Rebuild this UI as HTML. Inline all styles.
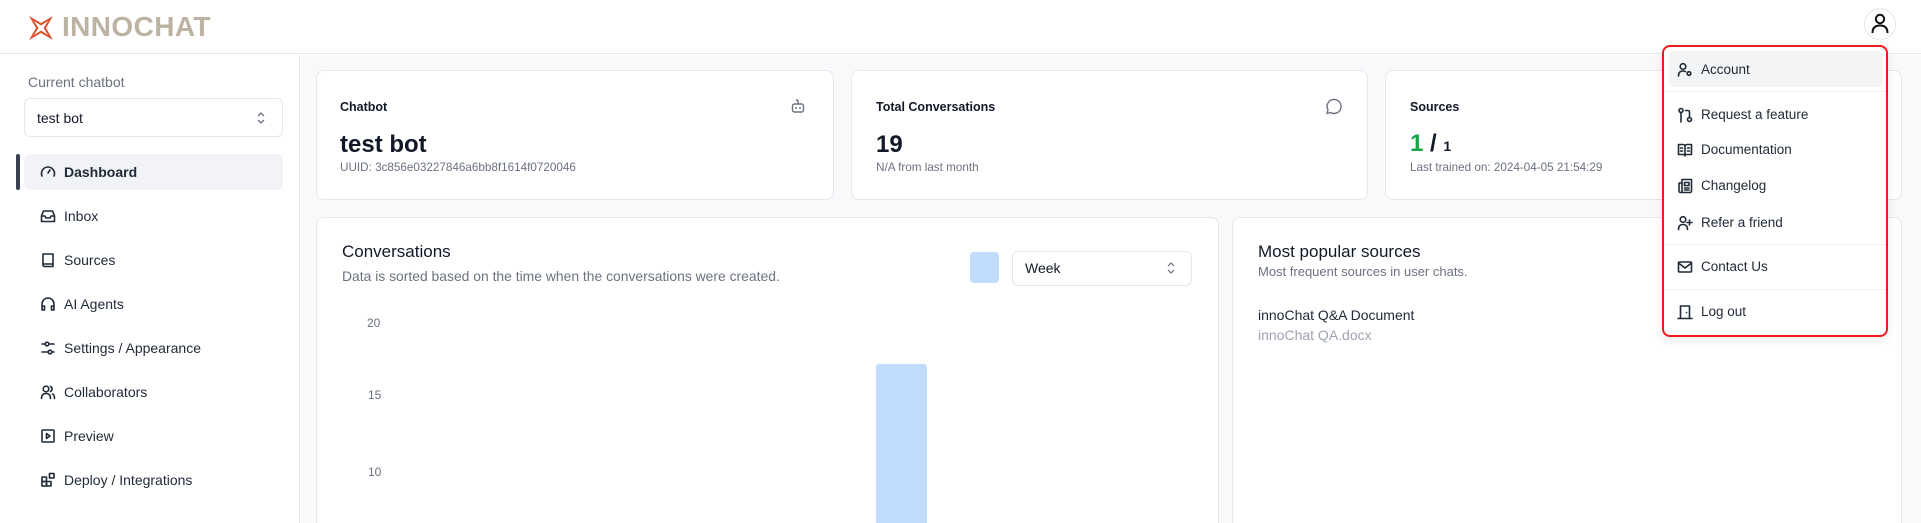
<!DOCTYPE html>
<html style="width:1921px;height:523px;overflow:hidden"><head><meta charset="utf-8"><style>
*{box-sizing:border-box;margin:0;padding:0}
body{width:1921px;height:523px;overflow:hidden;font-family:"Liberation Sans",sans-serif;background:#fff;color:#111827}
#wrap{position:relative;width:1921px;height:523px;overflow:hidden}
.abs{position:absolute}
.hdr{left:0;top:0;width:1921px;height:54px;border-bottom:1px solid #e5e7eb;background:#fff}
.side{left:0;top:55px;width:300px;height:468px;border-right:1px solid #e5e7eb;background:#fff}
.main{left:301px;top:55px;width:1620px;height:468px;background:#f8f9fb}
.card{position:absolute;background:#fff;border:1px solid #e5e7eb;border-radius:8px}
.card.b{border-bottom:none;border-radius:8px 8px 0 0}
.nav{position:absolute;left:24px;width:259px;height:36px;display:flex;align-items:center;font-size:14px;color:#1f2937}
.nav svg{position:absolute;left:16px}
.nav span{position:absolute;left:40px}
.ico{fill:none;stroke:#1f2937;stroke-width:1.6;stroke-linecap:round;stroke-linejoin:round}
.mi{position:absolute;left:1669px;width:214px;height:34px;font-size:13.5px;color:#1f2937}
.mi svg{position:absolute;left:8px;top:9px}
.mi span{position:absolute;left:32px;top:9px}
.sep{position:absolute;left:1664px;width:222px;height:1px;background:#eef0f3}
</style></head><body><div id="wrap">
<div class="abs hdr"></div>
<svg class="abs" style="left:27px;top:14px" width="28" height="28" viewBox="0 0 28 28"><path d="M2 2 L14 9 L26 2 L19 14 L26 26 L14 19 L2 26 L9 14 Z M7 7 L11.5 14 L7 21 L14 16.5 L21 21 L16.5 14 L21 7 L14 11.5 Z" fill="#d9532f" fill-rule="evenodd"/></svg>
<div class="abs" style="left:62px;top:11px;font-size:28px;font-weight:bold;color:#bdb3a2;letter-spacing:0.4px">INNOCHAT</div>
<div class="abs" style="left:1864px;top:8px;width:32px;height:32px;border:1px solid #e5e7eb;border-radius:50%"></div>
<svg class="abs" style="left:1870px;top:13px" width="20" height="22" viewBox="0 0 20 22"><circle cx="10" cy="6" r="4.2" fill="none" stroke="#111" stroke-width="2"/><path d="M2.5 20 C2.5 14 6 12.5 10 12.5 C14 12.5 17.5 14 17.5 20" fill="none" stroke="#111" stroke-width="2"/></svg>

<div class="abs side"></div>
<div class="abs" style="left:28px;top:74px;font-size:14px;color:#6b7280">Current chatbot</div>
<div class="abs" style="left:24px;top:98px;width:259px;height:39px;border:1px solid #e5e7eb;border-radius:6px"></div>
<div class="abs" style="left:37px;top:110px;font-size:14px">test bot</div>
<svg class="abs" style="left:255px;top:110px" width="12" height="16" viewBox="0 0 12 16"><path d="M3 6 L6 3 L9 6 M3 10 L6 13 L9 10" fill="none" stroke="#6b7280" stroke-width="1.3"/></svg>
<div class="abs" style="left:16px;top:154px;width:4px;height:36px;background:#374151;border-radius:2px"></div>
<div class="nav" style="top:154px;background:#f1f3f7;border-radius:6px;font-weight:bold"><svg width="16" height="16" viewBox="0 0 16 16" class="ico"><path d="M2 12 A6.5 6.5 0 1 1 14 12 M8 9 L10 6"/></svg><span>Dashboard</span></div>
<div class="nav" style="top:198px"><svg width="16" height="16" viewBox="0 0 16 16" class="ico"><path d="M1.5 8 L3.5 3 H12.5 L14.5 8 V13.5 H1.5 Z M1.5 8 H5 L6 10 H10 L11 8 H14.5"/></svg><span>Inbox</span></div>
<div class="nav" style="top:242px"><svg width="16" height="16" viewBox="0 0 16 16" class="ico"><path d="M3 2 H13 V14.5 H4.5 A1.5 1.5 0 0 1 3 13 Z M3 12 H13"/></svg><span>Sources</span></div>
<div class="nav" style="top:286px"><svg width="16" height="16" viewBox="0 0 16 16" class="ico"><path d="M2 12 V8 A6 6 0 0 1 14 8 V12 M2 10 H4.5 V14 H2 Z M11.5 10 H14 V14 H11.5 Z"/></svg><span>AI Agents</span></div>
<div class="nav" style="top:330px"><svg width="16" height="16" viewBox="0 0 16 16" class="ico"><path d="M2 4 H5 M9 4 H14 M2 12 H8 M12 12 H14"/><circle cx="7" cy="4" r="1.8"/><circle cx="10" cy="12" r="1.8"/></svg><span>Settings / Appearance</span></div>
<div class="nav" style="top:374px"><svg width="16" height="16" viewBox="0 0 16 16" class="ico"><circle cx="6" cy="5" r="2.8"/><path d="M1.5 14.5 C1.5 10.5 3.5 9.5 6 9.5 C8.5 9.5 10.5 10.5 10.5 14.5 M10.5 2.5 A2.8 2.8 0 0 1 10.5 7.5 M12.5 10 C14 10.5 14.5 12 14.5 14.5"/></svg><span>Collaborators</span></div>
<div class="nav" style="top:418px"><svg width="16" height="16" viewBox="0 0 16 16" class="ico"><rect x="2" y="2" width="12" height="12" rx="1"/><path d="M6.5 5.5 L10 8 L6.5 10.5 Z"/></svg><span>Preview</span></div>
<div class="nav" style="top:462px"><svg width="16" height="16" viewBox="0 0 16 16" class="ico"><rect x="2" y="5" width="4.5" height="4.5"/><rect x="2" y="9.5" width="4.5" height="4.5"/><rect x="6.5" y="9.5" width="4.5" height="4.5"/><rect x="9.5" y="1.5" width="4.5" height="4.5"/></svg><span>Deploy / Integrations</span></div>

<div class="abs main"></div>
<div class="card" style="left:316px;top:70px;width:518px;height:130px"></div>
<div class="abs" style="left:340px;top:100px;font-size:12.5px;font-weight:bold;color:#111827">Chatbot</div>
<svg class="abs" style="left:790px;top:98px" width="16" height="18" viewBox="0 0 16 18"><path d="M8 2 V6 M6 2 H8" fill="none" stroke="#6b7280" stroke-width="1.4"/><rect x="2.5" y="6" width="11" height="8" rx="2" fill="none" stroke="#6b7280" stroke-width="1.4"/><path d="M6 9 V11 M10 9 V11" stroke="#6b7280" stroke-width="1.4"/></svg>
<div class="abs" style="left:340px;top:131px;font-size:24px;font-weight:bold">test bot</div>
<div class="abs" style="left:340px;top:161px;font-size:11.7px;color:#6b7280">UUID: 3c856e03227846a6bb8f1614f0720046</div>

<div class="card" style="left:851px;top:70px;width:517px;height:130px"></div>
<div class="abs" style="left:876px;top:100px;font-size:12.5px;font-weight:bold">Total Conversations</div>
<svg class="abs" style="left:1324px;top:98px" width="18" height="18" viewBox="0 0 18 18"><path d="M3 15.5 L4 12 A7 7 0 1 1 6.5 14.5 Z" fill="none" stroke="#6b7280" stroke-width="1.4" stroke-linejoin="round"/></svg>
<div class="abs" style="left:876px;top:131px;font-size:24px;font-weight:bold">19</div>
<div class="abs" style="left:876px;top:161px;font-size:11.7px;color:#6b7280">N/A from last month</div>

<div class="card" style="left:1385px;top:70px;width:517px;height:130px"></div>
<div class="abs" style="left:1410px;top:100px;font-size:12.5px;font-weight:bold">Sources</div>
<div class="abs" style="left:1410px;top:130px;font-size:24px;font-weight:bold"><span style="color:#16a34a">1</span> / <span style="font-size:14px">1</span></div>
<div class="abs" style="left:1410px;top:161px;font-size:11.7px;color:#6b7280">Last trained on: 2024-04-05 21:54:29</div>

<div class="card b" style="left:316px;top:217px;width:903px;height:306px"></div>
<div class="abs" style="left:342px;top:242px;font-size:17px;color:#111827">Conversations</div>
<div class="abs" style="left:342px;top:268px;font-size:13.9px;color:#6b7280">Data is sorted based on the time when the conversations were created.</div>
<div class="abs" style="left:970px;top:252px;width:29px;height:31px;background:#bfdbfe;border-radius:4px"></div>
<div class="abs" style="left:1012px;top:251px;width:180px;height:35px;border:1px solid #e5e7eb;border-radius:6px;background:#fff"></div>
<div class="abs" style="left:1025px;top:260px;font-size:14px">Week</div>
<svg class="abs" style="left:1165px;top:260px" width="12" height="16" viewBox="0 0 12 16"><path d="M3 6 L6 3 L9 6 M3 10 L6 13 L9 10" fill="none" stroke="#6b7280" stroke-width="1.2"/></svg>
<div class="abs" style="left:367px;top:316px;font-size:12px;color:#6b7280">20</div>
<div class="abs" style="left:368px;top:388px;font-size:12px;color:#6b7280">15</div>
<div class="abs" style="left:368px;top:465px;font-size:12px;color:#6b7280">10</div>
<div class="abs" style="left:876px;top:364px;width:51px;height:159px;background:#bfdbfe;border-radius:3px 3px 0 0"></div>

<div class="card b" style="left:1232px;top:217px;width:670px;height:306px"></div>
<div class="abs" style="left:1258px;top:242px;font-size:17px">Most popular sources</div>
<div class="abs" style="left:1258px;top:264px;font-size:13px;color:#6b7280">Most frequent sources in user chats.</div>
<div class="abs" style="left:1258px;top:307px;font-size:14px;color:#1f2937">innoChat Q&amp;A Document</div>
<div class="abs" style="left:1258px;top:327px;font-size:14px;color:#9ca3af">innoChat QA.docx</div>

<div class="abs" style="left:1662px;top:45px;width:226px;height:292px;background:#fff;border:2px solid #ee1c1c;border-radius:8px;box-shadow:0 4px 10px rgba(0,0,0,.08)"></div>
<div class="abs" style="left:1669px;top:51px;width:214px;height:36px;background:#f3f4f6;border-radius:5px"></div>
<div class="mi" style="top:53px"><svg width="16" height="16" viewBox="0 0 16 16" class="ico"><circle cx="6" cy="4.5" r="2.8"/><path d="M1.5 14 C1.5 10 3.5 9 6 9 C7 9 7.8 9.2 8.5 9.6"/><circle cx="12" cy="11.5" r="1.8"/></svg><span>Account</span></div>
<div class="sep" style="top:91px"></div>
<div class="mi" style="top:98px"><svg width="16" height="16" viewBox="0 0 16 16" class="ico"><circle cx="4" cy="3.5" r="2"/><path d="M4 5.5 V15 M8.5 3.5 H11 A1.5 1.5 0 0 1 12.5 5 V10.5"/><circle cx="12.5" cy="12.5" r="2"/></svg><span>Request a feature</span></div>
<div class="mi" style="top:133px"><svg width="16" height="16" viewBox="0 0 16 16" class="ico"><path d="M1.5 2.5 H6 A2 2 0 0 1 8 4.5 V14 A1.5 1.5 0 0 0 6.5 12.5 H1.5 Z M14.5 2.5 H10 A2 2 0 0 0 8 4.5 V14 A1.5 1.5 0 0 1 9.5 12.5 H14.5 Z M3.5 6 H5.5 M3.5 9 H5.5 M10.5 6 H12.5 M10.5 9 H12.5"/></svg><span>Documentation</span></div>
<div class="mi" style="top:169px"><svg width="16" height="16" viewBox="0 0 16 16" class="ico"><path d="M4 14.5 H13 A1.5 1.5 0 0 0 14.5 13 V1.5 H5 V13 A1.5 1.5 0 0 1 2 13 V5 H5 M7.5 4.5 H12 V7.5 H7.5 Z M7.5 10 H12 M7.5 12 H12"/></svg><span>Changelog</span></div>
<div class="mi" style="top:206px"><svg width="16" height="16" viewBox="0 0 16 16" class="ico"><circle cx="6" cy="4.5" r="2.8"/><path d="M1.5 14.5 C1.5 10.5 3.5 9.5 6 9.5 C8.5 9.5 10.5 10.5 10.5 14.5 M12.5 5 V10 M10 7.5 H15"/></svg><span>Refer a friend</span></div>
<div class="sep" style="top:244px"></div>
<div class="mi" style="top:250px"><svg width="16" height="16" viewBox="0 0 16 16" class="ico"><rect x="1.5" y="3" width="13" height="10" rx="1"/><path d="M1.5 4 L8 9 L14.5 4"/></svg><span>Contact Us</span></div>
<div class="sep" style="top:289px"></div>
<div class="mi" style="top:295px"><svg width="16" height="16" viewBox="0 0 16 16" class="ico"><path d="M1 14.5 H15 M3.5 14.5 V2 H12.5 V14.5 M9.5 8.5 V8.6"/></svg><span>Log out</span></div>
</div></body></html>
